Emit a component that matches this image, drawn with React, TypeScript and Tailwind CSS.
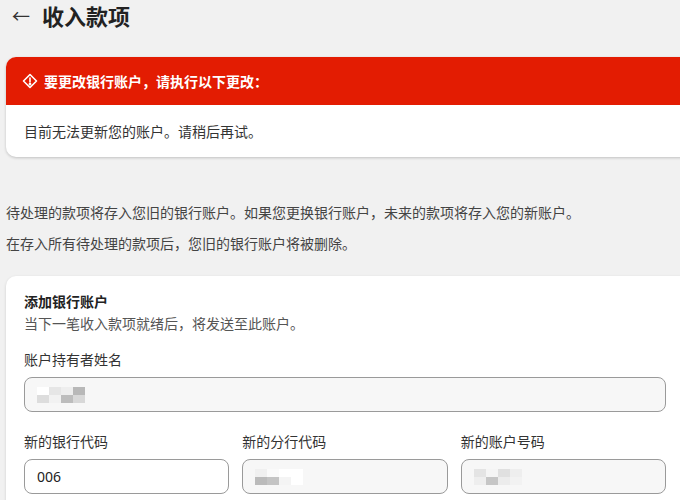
import React from "react";

const font = { fontFamily: '"Noto Sans", "Noto Sans CJK SC", sans-serif' };

const Blur: React.FC<{ cells: string[] }> = ({ cells }) => (
  <div className="grid grid-cols-4 w-[48px]">
    {cells.map((c, i) => (
      <div key={i} className="h-[8px]" style={{ background: c }} />
    ))}
  </div>
);

const Field: React.FC<{ label: string; children?: React.ReactNode; muted?: boolean }> = ({ label, children, muted }) => (
  <div className="flex flex-col">
    <label className="text-[14px] text-[#333] mb-[7px] leading-[20px]">{label}</label>
    <div className={`h-[35px] rounded-[8px] border border-[#9a9a9a] flex items-center px-[12px] text-[14px] text-[#222] ${muted ? "bg-[#f7f7f7]" : "bg-white"}`}>
      {children}
    </div>
  </div>
);

const App: React.FC = () => (
  <div className="w-[680px] h-[500px] overflow-hidden bg-[#f1f1f1]" style={font}>
    <div className="flex items-center h-[32px] pl-[12px] gap-[12px]">
      <span className="text-[18px] text-[#333] leading-none">←</span>
      <h1 className="text-[22px] font-bold text-[#222]">收入款项</h1>
    </div>

    <div className="ml-[6px] mt-[25px] w-[690px] rounded-[10px] bg-white shadow-[0_1px_3px_rgba(0,0,0,0.2)] overflow-hidden">
      <div className="h-[48px] bg-[#e31c02] flex items-center px-[16px] gap-[6px] text-white">
        <svg width="16" height="16" viewBox="0 0 16 16" fill="none" stroke="white" strokeWidth="1.6">
          <path d="M8 1.5 L14.5 8 L8 14.5 L1.5 8 Z" strokeLinejoin="round" />
          <path d="M8 5 V9" strokeLinecap="round" />
          <circle cx="8" cy="11.2" r="0.6" fill="white" />
        </svg>
        <span className="text-[14px] font-bold">要更改银行账户，请执行以下更改：</span>
      </div>
      <div className="h-[52px] flex items-center px-[18px] text-[14px] text-[#333]">
        目前无法更新您的账户。请稍后再试。
      </div>
    </div>

    <div className="mt-[40px] px-[6px] text-[14px] text-[#444] leading-[31px]">
      <p>待处理的款项将存入您旧的银行账户。如果您更换银行账户，未来的款项将存入您的新账户。</p>
      <p>在存入所有待处理的款项后，您旧的银行账户将被删除。</p>
    </div>

    <div className="ml-[6px] mt-[17px] w-[690px] rounded-[10px] bg-white shadow-[0_1px_3px_rgba(0,0,0,0.15)] pt-[16px] pl-[18px] pr-[30px] pb-[20px]">
      <h2 className="text-[14px] font-bold text-[#222] leading-[20px]">添加银行账户</h2>
      <p className="text-[14px] text-[#555] leading-[20px] mt-[2px]">当下一笔收入款项就绪后，将发送至此账户。</p>
      <div className="mt-[16px]">
        <Field label="账户持有者姓名" muted>
          <Blur cells={["#fff", "#e6e6e6", "#eee", "#b8b8b8", "#ddd", "#f2f2f2", "#bdbdbd", "#d8d8d8"]} />
        </Field>
      </div>
      <div className="mt-[20px] grid grid-cols-3 gap-[13px]">
        <Field label="新的银行代码">006</Field>
        <Field label="新的分行代码" muted>
          <Blur cells={["#f0f0f0", "#fafafa", "#fff", "#fff", "#bbb", "#c4c4c4", "#f4f4f4", "#fff"]} />
        </Field>
        <Field label="新的账户号码" muted>
          <Blur cells={["#e4e4e4", "#f5f5f5", "#e0e0e0", "#eee", "#eee", "#c6c6c6", "#ececec", "#f2f2f2"]} />
        </Field>
      </div>
    </div>
  </div>
);

export default App;
